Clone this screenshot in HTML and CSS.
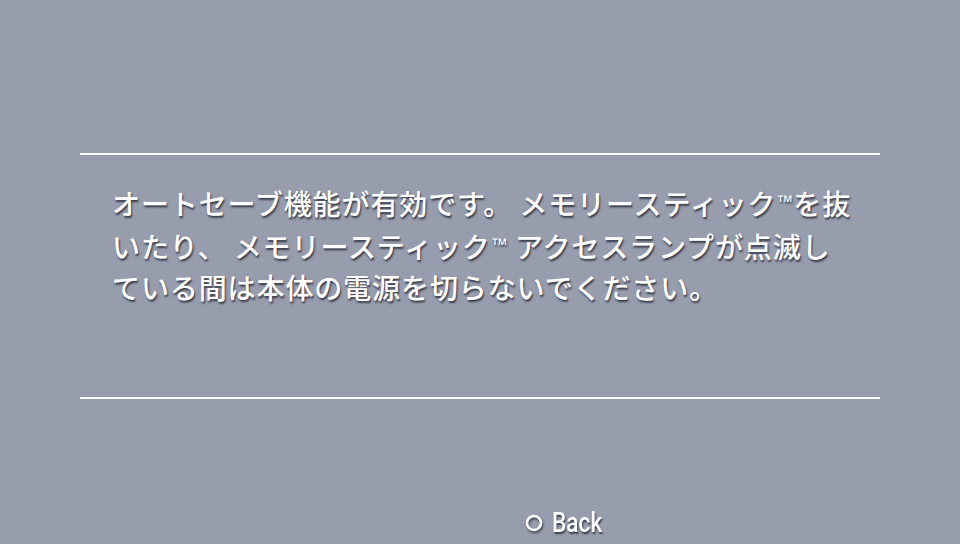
FILE: index.html
```html
<!DOCTYPE html>
<html lang="ja">
<head>
<meta charset="utf-8">
<link rel="stylesheet" href="styles.css">
</head>
<body>
<div class="screen">
  <div class="panel">
    <div class="rule"></div>
    <div class="message">
      <p class="line">オートセーブ機能が有効です。 メモリースティック<span class="tm">™</span>を抜</p>
      <p class="line">いたり、 メモリースティック<span class="tm">™</span> アクセスランプが点滅し</p>
      <p class="line">ている間は本体の電源を切らないでください。</p>
    </div>
    <div class="rule"></div>
  </div>
  <div class="footer">
    <div class="back">
      <svg class="circle" width="18" height="18" viewBox="0 0 18 18"><circle cx="9" cy="9" r="7" fill="none" stroke="#fff" stroke-width="2.6"/></svg>
      <span class="back-label">Back</span>
    </div>
  </div>
</div>
</body>
</html>
```

FILE: styles.css
```css
html, body {
  margin: 0;
  padding: 0;
}
body {
  width: 960px;
  height: 544px;
  overflow: hidden;
  background: #989dae;
  font-family: "Noto Sans CJK JP", "Noto Sans", sans-serif;
  color: #ffffff;
}
.screen {
  display: flex;
  flex-direction: column;
  height: 544px;
}
.panel {
  padding: 153px 80px 0 80px;
  height: 246px;
}
.rule {
  height: 2px;
  background: #ffffff;
}
.message {
  height: 242px;
  box-sizing: border-box;
  padding: 26px 0 0 32px;
}
.line {
  margin: 0;
  font-size: 28px;
  font-weight: 500;
  line-height: 41px;
  white-space: nowrap;
  letter-spacing: 0.9px;
  text-shadow: 1px 2px 2px rgba(30, 32, 45, 0.8);
}
.tm {
  font-size: 17px;
  vertical-align: 8px;
  font-family: "Liberation Sans", sans-serif;
  letter-spacing: 0;
}
.footer {
  flex: 1;
  display: flex;
  align-items: flex-end;
  padding-left: 525px;
  padding-bottom: 6px;
}
.back {
  display: flex;
  align-items: center;
  gap: 9px;
}
.circle {
  filter: drop-shadow(1px 2px 1px rgba(30, 32, 45, 0.7));
}
.back-label {
  font-family: "Roboto", sans-serif;
  font-weight: 500;
  font-size: 27px;
  line-height: 30px;
  display: inline-block;
  transform: scaleX(0.84);
  transform-origin: left center;
  text-shadow: 1px 2px 2px rgba(30, 32, 45, 0.8);
}
```
